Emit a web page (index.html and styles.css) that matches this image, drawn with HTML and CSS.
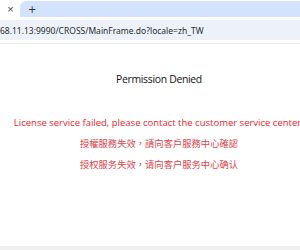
FILE: index.html
```html
<!DOCTYPE html>
<html>
  <head>
    <title>Permission Denied</title>
    <link rel="stylesheet" href="styles.css">
  </head>
  <body>
    <div class="browser">
      <div class="tab-strip">
        <div class="active-tab">
          <span class="tab-close">&times;</span>
        </div>
        <div class="tab-rest">
          <span class="new-tab">+</span>
        </div>
      </div>

      <div class="address-bar">
        <span class="url">68.11.13:9990/CROSS/MainFrame.do?locale=zh_TW</span>
      </div>

      <div class="page">
        <p class="title">Permission Denied</p>
        <p class="error-en">License service failed, please contact the customer service center</p>
        <p class="error-zh">授權服務失效，請向客戶服務中心確認</p>
        <p class="error-zh">授权服务失效，请向客户服务中心确认</p>
      </div>

      <div class="scrollbar"></div>
    </div>
  </body>
</html>
```

FILE: styles.css
```css
body {
  margin: 0;
  background-color: white;
  overflow: hidden;
}

.browser {
  width: 300px;
  height: 250px;
  display: flex;
  flex-direction: column;
  overflow: hidden;
}

.tab-strip {
  display: flex;
  height: 17px;
  flex-shrink: 0;
}

.active-tab {
  width: 20px;
  background-color: white;
  display: flex;
  align-items: center;
  justify-content: center;
}

.tab-close {
  font-family: "DejaVu Sans", sans-serif;
  font-size: 9px;
  color: #444;
  margin-left: 1px;
}

.tab-rest {
  flex: 1;
  margin-top: 1px;
  background-color: #d3e3fd;
  border-top-left-radius: 6px;
  display: flex;
  align-items: center;
  padding-left: 8px;
}

.new-tab {
  font-family: "DejaVu Sans", sans-serif;
  font-size: 10px;
  color: #333;
}

.address-bar {
  margin-top: 3px;
  height: 20px;
  flex-shrink: 0;
  background-color: #edf2fa;
  display: flex;
  align-items: center;
  border-bottom: 3px solid white;
}

.url {
  font-family: "Noto Sans", sans-serif;
  font-size: 8.5px;
  color: #2a2a2a;
  white-space: nowrap;
}

.page {
  flex: 1;
  border-top: 1px solid #ececec;
  width: 318px;
  display: flex;
  flex-direction: column;
  align-items: center;
}

.title {
  font-family: "Open Sans", sans-serif;
  font-size: 10.4px;
  letter-spacing: -0.3px;
  color: #111;
  margin: 28px 0 0 0;
}

.error-en {
  font-family: "Open Sans", sans-serif;
  font-size: 9.5px;
  color: #e8262b;
  white-space: nowrap;
  margin: 30px 0 0 -3px;
}

.error-zh {
  font-family: "Noto Sans CJK TC", sans-serif;
  font-size: 9.3px;
  color: #d9434a;
  white-space: nowrap;
  margin: 7px 0 0 0;
}

.scrollbar {
  height: 4px;
  flex-shrink: 0;
  background-color: #f0f0f0;
}
```
